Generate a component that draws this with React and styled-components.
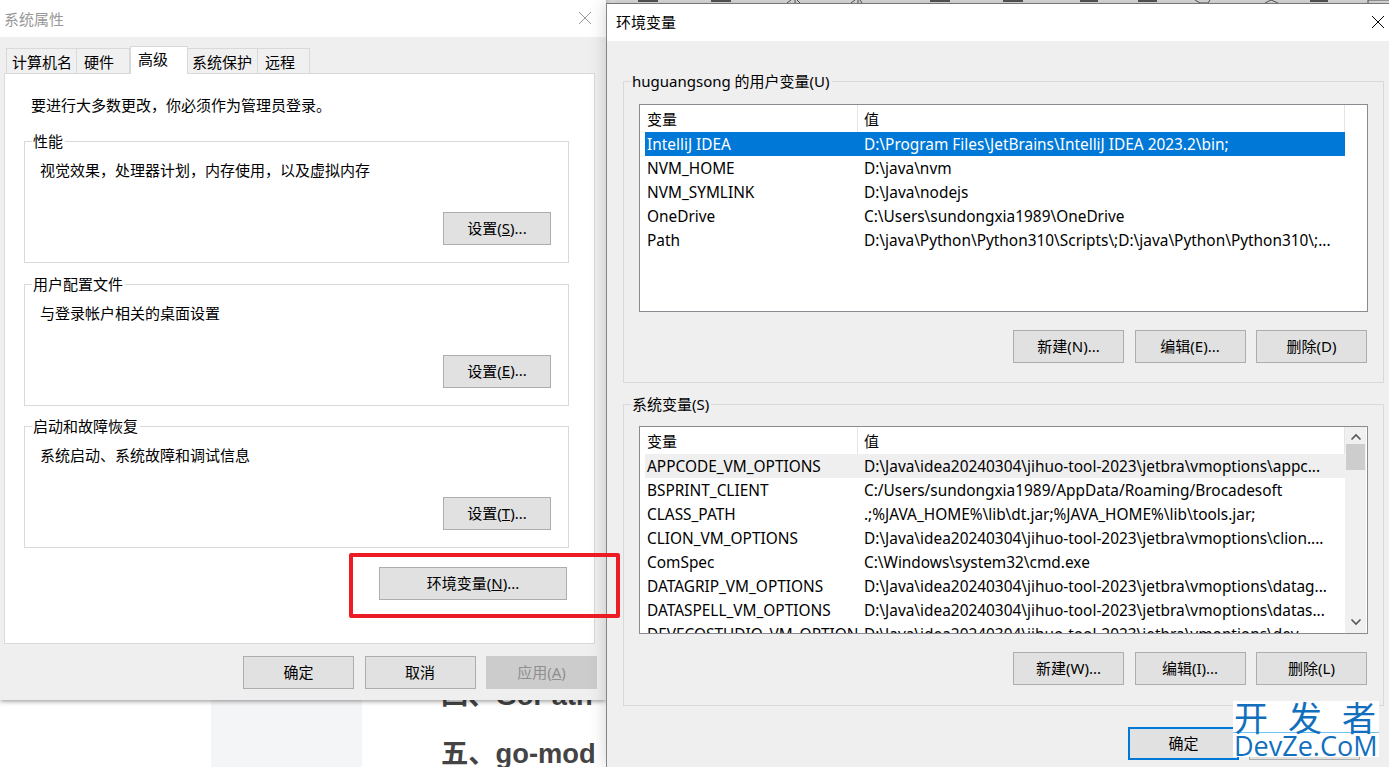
import React from "react";
import styled, { createGlobalStyle } from "styled-components";

const Global = createGlobalStyle`
  html, body { margin: 0; padding: 0; background: #fff; }
  body { font-family: "Noto Sans", "Noto Sans CJK SC", sans-serif; font-size: 15px; color: #000; }
`;

const Desktop = styled.div`
  position: relative;
  width: 1389px;
  height: 767px;
  overflow: hidden;
  background: #fff;
`;
const Backdrop = styled.div`
  display: flex;
  flex-direction: column;
  height: 100%;
`;
const ToolStrip = styled.svg`
  display: block;
  flex: none;
  width: 1389px;
  height: 4px;
`;
const PageColumns = styled.div`
  flex: 1;
  display: grid;
  grid-template-columns: 211px 151px 1fr;
`;
const SideRail = styled.div`
  grid-column: 2;
  background: #f4f5f7;
`;
const Article = styled.div`
  grid-column: 3;
  padding: 662.5px 0 0 79px;
`;
const Heading = styled.h2`
  margin: 0;
  font: bold 27.3px/58px "Liberation Sans", "Noto Sans CJK SC", sans-serif;
  color: #444;
  white-space: nowrap;
`;

const Window = styled.section`
  position: absolute;
  display: flex;
  flex-direction: column;
  background: #efefef;
`;
const SystemWindow = styled(Window)`
  left: 0;
  top: 0;
  width: 606px;
  height: 700px;
  box-shadow: 0 1px 5px rgba(0, 0, 0, 0.45);
`;
const EnvWindow = styled(Window)`
  left: 606px;
  top: 3px;
  width: 783px;
  height: 764px;
  border-left: 1px solid #858585;
  border-top: 1px solid #777;
  box-shadow: 0 0 16px rgba(0, 0, 0, 0.18);
  box-sizing: border-box;
`;
const TitleBar = styled.header`
  flex: none;
  box-sizing: border-box;
  height: 37px;
  background: #fff;
  display: flex;
  align-items: center;
  justify-content: space-between;
  padding: ${(p) => (p.$active ? "0 4px 2px 9px" : "0 14px 1px 4px")};
  color: ${(p) => (p.$active ? "#000" : "#999")};
  font-size: 15px;
`;
const CloseIcon = styled.svg`
  width: 14px;
  height: 14px;
  flex: none;
`;

const Tabs = styled.div`
  display: flex;
  align-items: flex-end;
  height: 27px;
  margin: 10px 0 -1px 6px;
  position: relative;
  z-index: 1;
`;
const Tab = styled.div`
  box-sizing: border-box;
  width: ${(p) => p.$w}px;
  height: ${(p) => (p.$selected ? 28 : 26)}px;
  padding: ${(p) => (p.$selected ? 1 : 2)}px 0 0 ${(p) => p.$pl}px;
  background: ${(p) => (p.$selected ? "#fff" : "#f0f0f0")};
  border: 1px solid #d9d9d9;
  border-left-width: ${(p) => (p.$selected ? 1 : 0)}px;
  border-bottom: ${(p) => (p.$selected ? "none" : "1px solid #d9d9d9")};
  line-height: 22px;
  font-size: 15px;
  white-space: nowrap;
  &:first-child { border-left-width: 1px; }
`;
const TabPanel = styled.div`
  box-sizing: border-box;
  width: 591px;
  height: 571px;
  margin-left: 4px;
  background: #fff;
  border: 1px solid #d9d9d9;
  padding: 20px 25px 0 19px;
  display: flex;
  flex-direction: column;
`;
const Notice = styled.p`
  margin: 0 0 25px 7px;
  height: 22px;
  line-height: 22px;
  font-size: 15px;
`;
const Group = styled.div`
  position: relative;
  box-sizing: border-box;
  border: 1px solid #d9d9d9;
`;
const PropGroup = styled(Group)`
  height: 122px;
  margin-bottom: 20.5px;
  padding: 17px 17px 0 15px;
  display: flex;
  flex-direction: column;
  align-items: flex-start;
`;
const Legend = styled.span`
  position: absolute;
  top: -11px;
  left: 7px;
  padding: 0 2px 0 1px;
  line-height: 20px;
  font-size: 15px;
  background: ${(p) => p.$bg};
  white-space: nowrap;
`;
const PropText = styled.div`
  line-height: 22px;
  font-size: 15px;
  flex: 1;
`;
const Button = styled.button`
  all: unset;
  box-sizing: border-box;
  display: flex;
  align-items: center;
  justify-content: center;
  flex: none;
  width: ${(p) => p.$w || 111}px;
  height: 33px;
  padding-bottom: 2px;
  background: ${(p) => (p.$disabled ? "#cccccc" : "#e1e1e1")};
  color: ${(p) => (p.$disabled ? "#8f8f8f" : "#000")};
  border: ${(p) => (p.$default ? "2px solid #0078d7" : p.$disabled ? "1px solid #cccccc" : "1px solid #adadad")};
  font-size: 15px;
  white-space: nowrap;
`;
const PropButton = styled(Button)`
  align-self: flex-end;
  margin-bottom: 17px;
`;
const EnvButtonRow = styled.div`
  display: flex;
  justify-content: flex-end;
  margin: -1.5px 2px 0 0;
`;
const Footer = styled.footer`
  display: flex;
  justify-content: flex-end;
  gap: 10.5px;
  margin: 12px 9px 0 0;
`;

const EnvBody = styled.div`
  flex: 1;
  display: flex;
  flex-direction: column;
  padding: 40px 5px 0 16px;
`;
const VarGroup = styled(Group)`
  height: 302px;
  margin-bottom: 21px;
  padding: ${(p) => p.$pt}px 15px 0 15px;
`;
const ListBox = styled.div`
  box-sizing: border-box;
  height: 208px;
  width: 729px;
  background: #fff;
  border: 1px solid #8a8a90;
  padding-left: 5px;
  display: flex;
  overflow: hidden;
`;
const ListInner = styled.div`
  width: 700px;
  flex: none;
  overflow: hidden;
`;
const HeaderRow = styled.div`
  display: grid;
  grid-template-columns: 213px 1fr;
  height: 27px;
  border-right: 1px solid #e5e5e5;
  font-size: 15px;
`;
const HeaderCell = styled.div`
  padding-left: ${(p) => (p.$first ? 2 : 6)}px;
  line-height: 29px;
  height: 27px;
  border-right: ${(p) => (p.$first ? "1px solid #e5e5e5" : "none")};
`;
const Row = styled.div`
  display: grid;
  grid-template-columns: 213px 1fr;
  height: 24px;
  line-height: 26px;
  font-size: 15.4px;
  white-space: nowrap;
  overflow: hidden;
  background: ${(p) => (p.$selected ? "#0078d7" : p.$dim ? "#efefef" : "transparent")};
  color: ${(p) => (p.$selected ? "#fff" : "#000")};
`;
const Cell = styled.div`
  padding-left: ${(p) => (p.$first ? 2 : 6)}px;
  overflow: hidden;
`;
const Scrollbar = styled.div`
  width: 21px;
  flex: none;
  background: #f0f0f0;
  display: flex;
  flex-direction: column;
  align-items: center;
`;
const ScrollArrow = styled.svg`
  flex: none;
  width: 12px;
  height: 8px;
  margin: ${(p) => p.$m};
`;
const ScrollThumb = styled.div`
  width: 19px;
  height: 26px;
  background: #cdcdcd;
`;
const ScrollSpace = styled.div`
  flex: 1;
`;
const ButtonRow = styled.div`
  display: flex;
  justify-content: flex-end;
  gap: 10.5px;
  margin: 18px 1px 0 0;
`;
const DialogFooter = styled.div`
  display: flex;
  justify-content: flex-end;
  gap: 10px;
  margin-right: 24px;
`;

const Highlight = styled.div`
  position: absolute;
  left: 349px;
  top: 553px;
  width: 271px;
  height: 65px;
  box-sizing: border-box;
  border: 4px solid #ed1c24;
  border-radius: 2px;
`;
const Watermark = styled.div`
  position: absolute;
  left: 1233px;
  top: 701px;
  width: 146px;
  height: 56px;
  background: #fff;
  color: #126fbe;
  overflow: hidden;
`;
const MarkTop = styled.div`
  height: 31px;
  border-bottom: 1px solid #6cc3ee;
  font: 34px/31px "Noto Sans CJK SC", sans-serif;
  letter-spacing: 20px;
  margin-right: -20px;
  padding-left: 1px;
  white-space: nowrap;
`;
const MarkBottom = styled.div`
  font: 27px/25px "Open Sans", sans-serif;
  padding-left: 1px;
  white-space: nowrap;
`;

const Close = ({ color }) => (
  <CloseIcon viewBox="0 0 14 14">
    <path d="M1 1L13 13M13 1L1 13" stroke={color} strokeWidth="1" fill="none" />
  </CloseIcon>
);

const userVars = [
  ["IntelliJ IDEA", "D:\\Program Files\\JetBrains\\IntelliJ IDEA 2023.2\\bin;"],
  ["NVM_HOME", "D:\\java\\nvm"],
  ["NVM_SYMLINK", "D:\\Java\\nodejs"],
  ["OneDrive", "C:\\Users\\sundongxia1989\\OneDrive"],
  ["Path", "D:\\java\\Python\\Python310\\Scripts\\;D:\\java\\Python\\Python310\\;..."],
];
const base = "D:\\Java\\idea20240304\\jihuo-tool-2023\\jetbra\\vmoptions\\";
const sysVars = [
  ["APPCODE_VM_OPTIONS", base + "appc..."],
  ["BSPRINT_CLIENT", "C:/Users/sundongxia1989/AppData/Roaming/Brocadesoft"],
  ["CLASS_PATH", ".;%JAVA_HOME%\\lib\\dt.jar;%JAVA_HOME%\\lib\\tools.jar;"],
  ["CLION_VM_OPTIONS", base + "clion...."],
  ["ComSpec", "C:\\Windows\\system32\\cmd.exe"],
  ["DATAGRIP_VM_OPTIONS", base + "datag..."],
  ["DATASPELL_VM_OPTIONS", base + "datas..."],
  ["DEVECOSTUDIO_VM_OPTIONS", base + "dev..."],
];

const VarList = ({ rows, selected, dim, scroll }) => (
  <ListBox>
    <ListInner>
      <HeaderRow>
        <HeaderCell $first>变量</HeaderCell>
        <HeaderCell>值</HeaderCell>
      </HeaderRow>
      {rows.map(([k, v], i) => (
        <Row key={k} $selected={i === selected} $dim={i === dim}>
          <Cell $first>{k}</Cell>
          <Cell>{v}</Cell>
        </Row>
      ))}
    </ListInner>
    {scroll && (
      <Scrollbar>
        <ScrollArrow viewBox="0 0 12 8" $m="6px 0 3px">
          <path d="M1.5 6.5L6 2L10.5 6.5" stroke="#555" strokeWidth="1.6" fill="none" />
        </ScrollArrow>
        <ScrollThumb />
        <ScrollSpace />
        <ScrollArrow viewBox="0 0 12 8" $m="0 0 7px">
          <path d="M1.5 1.5L6 6L10.5 1.5" stroke="#555" strokeWidth="1.6" fill="none" />
        </ScrollArrow>
      </Scrollbar>
    )}
  </ListBox>
);

const stripMarks = [
  [638, 20], [711, 20], [930, 20], [1003, 20], [1080, 18], [1138, 19], [1310, 18],
];

export default function App() {
  return (
    <Desktop>
      <Global />
      <Backdrop>
        <ToolStrip viewBox="0 0 1389 4">
          <rect width="1389" height="4" fill="#dedede" />
          <rect y="3" width="1389" height="1" fill="#8a8a8a" />
          {stripMarks.map(([x, w]) => (
            <rect key={x} x={x} y="0" width={w} height="2" fill="#555" />
          ))}
          <path d="M787 3L791 0M795 3V0M800 3L797 0M851 3L855 0M858 3V0M862 3L860 0M1195 0L1200 3H1208L1210 0M1265 3L1271 0L1278 3M1368 3V0H1389" stroke="#555" fill="none" />
        </ToolStrip>
        <PageColumns>
          <SideRail />
          <Article>
            <Heading>四、GoPath</Heading>
            <Heading>五、go-mod</Heading>
          </Article>
        </PageColumns>
      </Backdrop>

      <SystemWindow>
        <TitleBar>
          系统属性
          <Close color="#999" />
        </TitleBar>
        <Tabs>
          <Tab $w={71} $pl={5}>计算机名</Tab>
          <Tab $w={53} $pl={7}>硬件</Tab>
          <Tab $w={58} $pl={7} $selected>高级</Tab>
          <Tab $w={70} $pl={4}>系统保护</Tab>
          <Tab $w={52} $pl={7}>远程</Tab>
        </Tabs>
        <TabPanel>
          <Notice>要进行大多数更改，你必须作为管理员登录。</Notice>
          <PropGroup>
            <Legend $bg="#fff">性能</Legend>
            <PropText>视觉效果，处理器计划，内存使用，以及虚拟内存</PropText>
            <PropButton $w={108}>设置(<u>S</u>)...</PropButton>
          </PropGroup>
          <PropGroup>
            <Legend $bg="#fff">用户配置文件</Legend>
            <PropText>与登录帐户相关的桌面设置</PropText>
            <PropButton $w={108}>设置(<u>E</u>)...</PropButton>
          </PropGroup>
          <PropGroup>
            <Legend $bg="#fff">启动和故障恢复</Legend>
            <PropText>系统启动、系统故障和调试信息</PropText>
            <PropButton $w={108}>设置(<u>T</u>)...</PropButton>
          </PropGroup>
          <EnvButtonRow>
            <Button $w={188}>环境变量(<u>N</u>)...</Button>
          </EnvButtonRow>
        </TabPanel>
        <Footer>
          <Button>确定</Button>
          <Button>取消</Button>
          <Button $disabled>应用(<u>A</u>)</Button>
        </Footer>
      </SystemWindow>

      <EnvWindow>
        <TitleBar $active>
          环境变量
          <Close color="#000" />
        </TitleBar>
        <EnvBody>
          <VarGroup $pt={22}>
            <Legend $bg="#efefef">huguangsong 的用户变量(U)</Legend>
            <VarList rows={userVars} selected={0} />
            <ButtonRow>
              <Button>新建(N)...</Button>
              <Button>编辑(E)...</Button>
              <Button>删除(D)</Button>
            </ButtonRow>
          </VarGroup>
          <VarGroup $pt={21}>
            <Legend $bg="#efefef">系统变量(S)</Legend>
            <VarList rows={sysVars} dim={0} scroll />
            <ButtonRow>
              <Button>新建(W)...</Button>
              <Button>编辑(I)...</Button>
              <Button>删除(L)</Button>
            </ButtonRow>
          </VarGroup>
          <DialogFooter>
            <Button $default>确定</Button>
            <Button>取消</Button>
          </DialogFooter>
        </EnvBody>
      </EnvWindow>

      <Highlight />
      <Watermark>
        <MarkTop>开发者</MarkTop>
        <MarkBottom>DevZe.CoM</MarkBottom>
      </Watermark>
    </Desktop>
  );
}
